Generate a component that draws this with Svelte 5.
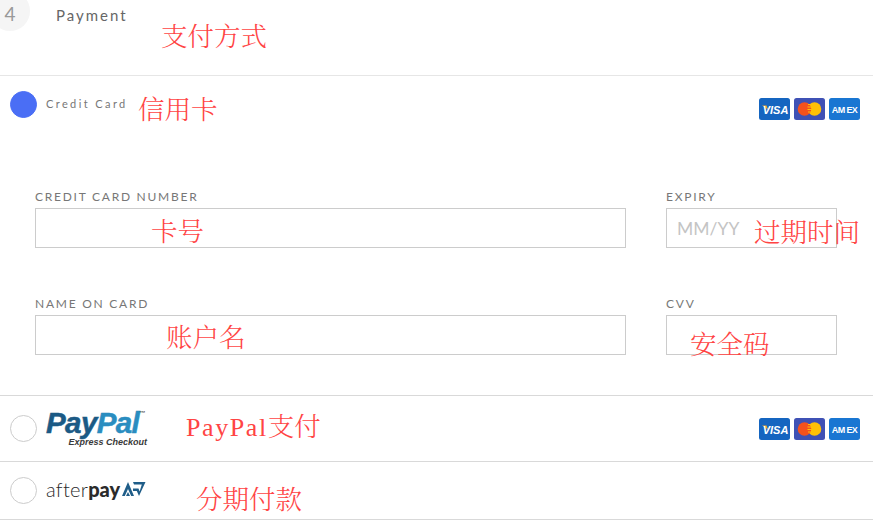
<script>
  const fields = [
    { label: "CREDIT CARD NUMBER", placeholder: "" },
    { label: "EXPIRY", placeholder: "MM/YY" },
    { label: "NAME ON CARD", placeholder: "" },
    { label: "CVV", placeholder: "" }
  ];

  // red notes written over the screenshot
  const notes = [
    { text: "支付方式", x: 161, y: 19 },
    { text: "信用卡", x: 138, y: 92 },
    { text: "卡号", x: 151, y: 214 },
    { text: "过期时间", x: 754, y: 215 },
    { text: "账户名", x: 166, y: 320 },
    { text: "安全码", x: 690, y: 327 },
    { latin: "PayPal", text: "支付", x: 186, y: 409 },
    { text: "分期付款", x: 196, y: 482 }
  ];
</script>

{#snippet cards()}
  <div class="cards">
    <svg width="31" height="22" viewBox="0 0 31 22">
      <rect width="31" height="22" rx="2.5" fill="#1565c0" />
      <path d="M3 7.5h4.5l1.5 4z" fill="#f9a825" />
      <text x="16.5" y="15.5" text-anchor="middle" class="visa">VISA</text>
    </svg>
    <svg width="31" height="22" viewBox="0 0 31 22">
      <rect width="31" height="22" rx="2.5" fill="#3f51b5" />
      <circle cx="20.5" cy="11" r="6.8" fill="#ffc107" />
      <circle cx="10.5" cy="11" r="6.8" fill="#f4511e" />
      <path d="M14 6.5h3.5M13.5 9h4.5M13.5 11.5h4.5M14 14h3.5" stroke="#ffc107" stroke-width="1" />
    </svg>
    <svg width="31" height="22" viewBox="0 0 31 22">
      <rect width="31" height="22" rx="2.5" fill="#1976d2" />
      <text x="15.5" y="14.5" text-anchor="middle" class="amex">AM EX</text>
    </svg>
  </div>
{/snippet}

<div class="page">
  <header class="head">
    <span class="step">4</span>
    <span class="title">Payment</span>
  </header>

  <section class="method card-method">
    <div class="row">
      <span class="radio checked"></span>
      <span class="name">Credit Card</span>
      {@render cards()}
    </div>
    <div class="form">
      {#each fields as f}
        <label class="field">
          <span class="label">{f.label}</span>
          <input type="text" placeholder={f.placeholder} />
        </label>
      {/each}
    </div>
  </section>

  <section class="method paypal-method">
    <div class="row">
      <span class="radio"></span>
      <div class="paypal">
        <div class="pp-word"><span class="pp-a">Pay</span><span class="pp-b">Pal</span><sup>™</sup></div>
        <div class="pp-sub">Express Checkout</div>
      </div>
      {@render cards()}
    </div>
  </section>

  <section class="method after-method">
    <div class="row">
      <span class="radio"></span>
      <div class="afterpay">
        <span class="ap-light">after</span><span class="ap-bold">pay</span>
        <svg width="25" height="16" viewBox="0 0 25 16">
          <path d="M7 1 13 15H10.2L7 8 3.8 15H1z" fill="#1f5d88" />
          <path d="M5 15 7 11l2 4z" fill="#1f5d88" />
          <path d="M12 1H24.5L18 15 15.8 10H12V7.6h5.5L18.6 10.5 20.8 3.6H13z" fill="#1f5d88" />
        </svg>
      </div>
    </div>
  </section>

  {#each notes as n}
    <span class="note" style="left:{n.x}px;top:{n.y}px">{#if n.latin}<span class="latin">{n.latin}</span>{/if}{n.text}</span>
  {/each}
</div>

<style>
  :global(body) {
    background: #fff;
    overflow: hidden;
  }

  .page {
    position: relative;
    width: 873px;
    height: 520px;
    overflow: hidden;
    font-family: Lato, sans-serif;
    color: #666;
  }

  .head {
    height: 75px;
    box-sizing: content-box;
    border-bottom: 1px solid #e6e6e6;
    display: flex;
    align-items: flex-start;
  }

  .step {
    width: 40px;
    height: 40px;
    margin: -9px 0 0 -10px;
    border-radius: 50%;
    background: #f5f5f5;
    color: #999;
    font-size: 19px;
    line-height: 46px;
    text-align: center;
    flex: none;
  }

  .title {
    margin: 6px 0 0 26px;
    font-size: 15px;
    line-height: 18px;
    letter-spacing: 2px;
    color: #666;
  }

  .method {
    border-bottom: 1px solid #d9d9d9;
    box-sizing: border-box;
  }

  .card-method { height: 320px; padding-top: 15px; }
  .paypal-method { height: 66px; padding-top: 19px; }
  .after-method { height: 58px; padding-top: 15px; }

  .row {
    display: flex;
    align-items: flex-start;
    padding: 0 13px 0 10px;
  }

  .radio {
    width: 27px;
    height: 27px;
    box-sizing: border-box;
    border-radius: 50%;
    border: 1px solid #ccc;
    flex: none;
    margin-right: 9px;
  }

  .radio.checked {
    background: #4a6ef5;
    border-color: #4a6ef5;
  }

  .name {
    font-size: 11px;
    line-height: 14px;
    letter-spacing: 2.4px;
    color: #777;
    margin-top: 6px;
  }

  .cards {
    margin-left: auto;
    margin-top: 7px;
    display: flex;
    gap: 4px;
  }

  .paypal-method .cards { margin-top: 3px; }

  .cards svg { display: block; }

  .visa {
    font: italic 700 11px "Liberation Sans", sans-serif;
    fill: #fff;
  }

  .amex {
    font: 700 9px "Liberation Sans", sans-serif;
    letter-spacing: -0.6px;
    fill: #fff;
  }

  .form {
    display: grid;
    grid-template-columns: 591px 171px;
    column-gap: 40px;
    row-gap: 49px;
    margin: 70px 0 0 35px;
  }

  .field { display: block; }

  .label {
    display: block;
    font-size: 12px;
    line-height: 14px;
    letter-spacing: 1.75px;
    color: #777;
    margin-bottom: 4px;
  }

  input {
    display: block;
    width: 100%;
    height: 40px;
    box-sizing: border-box;
    border: 1px solid #ccc;
    border-radius: 0;
    padding: 0 10px;
    font: 17.5px Lato, sans-serif;
    outline: none;
  }

  input::placeholder { color: #c4c4c4; }

  .paypal {
    width: 101px;
    margin-top: -5px;
    font-family: "Liberation Sans", sans-serif;
    font-style: italic;
    font-weight: 700;
  }

  .pp-word {
    font-size: 29.5px;
    line-height: 26px;
    letter-spacing: -0.6px;
    white-space: nowrap;
  }

  .pp-word sup {
    font-size: 6px;
    font-style: normal;
    vertical-align: 18px;
    line-height: 0;
    color: #555;
  }

  .pp-a { color: #1b5a85; -webkit-text-stroke: 0.5px #1b5a85; }
  .pp-b { color: #2a8dc0; -webkit-text-stroke: 0.5px #2a8dc0; }

  .pp-sub {
    margin-top: 1px;
    font-size: 9px;
    line-height: 10px;
    text-align: right;
    color: #3a3a3a;
    white-space: nowrap;
  }

  .afterpay {
    display: flex;
    align-items: center;
    height: 24px;
    font-family: Lato, sans-serif;
    font-size: 20px;
    color: #2b2b2b;
  }

  .ap-light { font-weight: 300; letter-spacing: 0.3px; }
  .ap-bold { font-weight: 900; }
  .afterpay svg { margin-left: 1px; margin-top: -1px; }

  .note {
    position: absolute;
    font-family: "Noto Serif CJK SC", "Liberation Serif", "Noto Sans CJK SC", serif;
    font-weight: 300;
    font-size: 26.5px;
    line-height: 32px;
    color: #f44;
    white-space: nowrap;
  }

  .latin {
    font-family: "Liberation Serif", serif;
    font-size: 26px;
    font-weight: 400;
    letter-spacing: 1.6px;
  }
</style>
